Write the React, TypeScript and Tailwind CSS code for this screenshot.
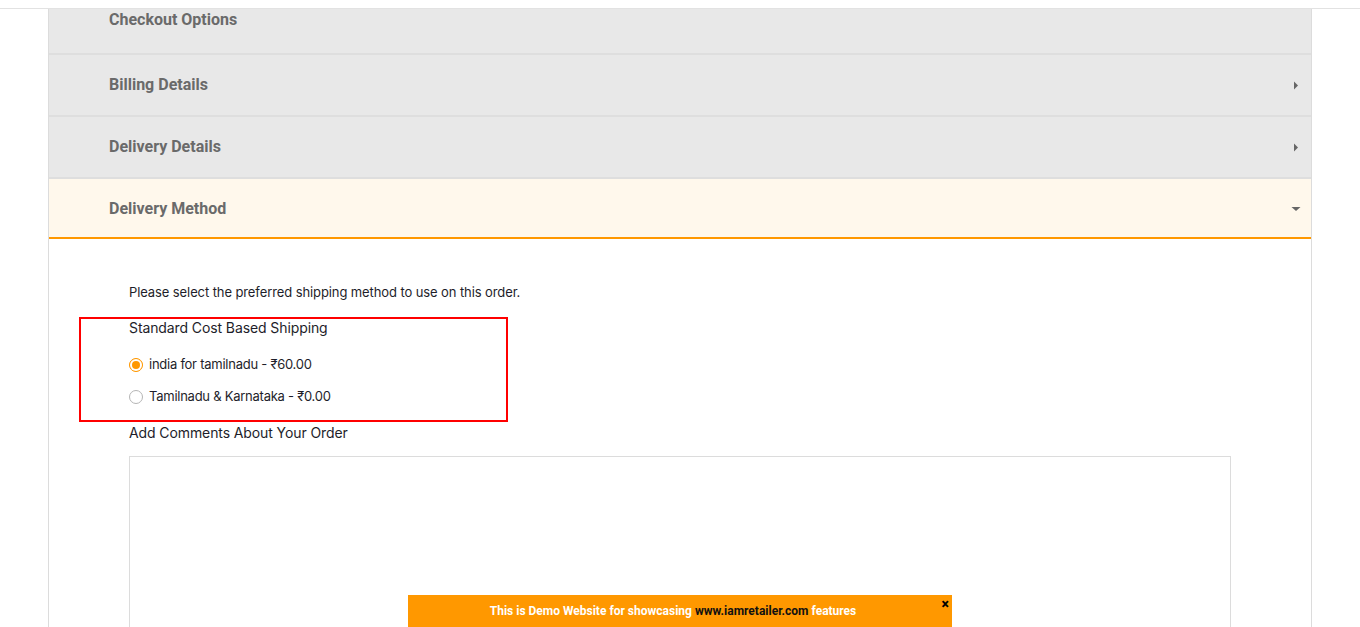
export default function App() {
  const headers = [
    { title: "Billing Details" },
    { title: "Delivery Details" },
  ];
  return (
    <div className="relative h-[627px] overflow-hidden bg-white" style={{ fontFamily: "Inter, 'Noto Sans', sans-serif" }}>
      <div className="pt-2">
        <div className="border-t border-[#e2e2e2]">
          <div className="ml-[48px] w-[1264px] border-x border-[#dcdcdc]">
            <div className="h-[46px] bg-[#e8e8e8] border-b-2 border-[#dedede] pl-[60px]">
              <span className="relative top-[-2px] text-[16px] font-bold text-[#6a6a6a]" style={{ fontFamily: "Roboto, sans-serif" }}>Checkout Options</span>
            </div>
            {headers.map((h) => (
              <div key={h.title} className="h-[62px] bg-[#e8e8e8] border-b-2 border-[#dedede] pl-[60px] pr-[12px] flex items-center justify-between">
                <span className="text-[16px] font-bold text-[#6a6a6a]" style={{ fontFamily: "Roboto, sans-serif" }}>{h.title}</span>
                <svg width="6" height="9" viewBox="0 0 6 9"><path d="M1 0.5L5 4.5L1 8.5Z" fill="#666" /></svg>
              </div>
            ))}
            <div className="h-[60px] bg-[#fff8ec] border-b-2 border-[#ff9800] pl-[60px] pr-[10px] pt-[2px] flex items-center justify-between">
              <span className="text-[16px] font-bold text-[#6a6a6a]" style={{ fontFamily: "Roboto, sans-serif" }}>Delivery Method</span>
              <svg width="10" height="6" viewBox="0 0 10 6"><path d="M0.5 1L9.5 1L5 5Z" fill="#666" /></svg>
            </div>
            <div className="relative pl-[80px] pr-[80px] pt-[43px] text-[#1e1e2a]">
              <p className="text-[13px] leading-[20px] tracking-[-0.1px]">Please select the preferred shipping method to use on this order.</p>
              <p className="mt-[16px] text-[14px] leading-[20px] tracking-[-0.1px]">Standard Cost Based Shipping</p>
              <label className="mt-[17px] flex items-center gap-[6px] h-[20px] text-[13px] tracking-[-0.25px]">
                <span className="w-[14px] h-[14px] rounded-full bg-[#ff9800] border-[1px] border-[#ff9800] flex items-center justify-center">
                  <span className="w-[8px] h-[8px] rounded-full bg-[#ff9800] ring-2 ring-white"></span>
                </span>
                india for tamilnadu - ₹60.00
              </label>
              <label className="mt-[12px] flex items-center gap-[6px] h-[20px] text-[13px] tracking-[-0.25px]">
                <span className="w-[14px] h-[14px] rounded-full border-[1.5px] border-[#b5b5b5] bg-white"></span>
                Tamilnadu &amp; Karnataka - ₹0.00
              </label>
              <p className="mt-[16px] text-[14px] leading-[20px] tracking-[-0.1px]">Add Comments About Your Order</p>
              <div className="mt-[13px] h-[200px] border border-[#dcdcdc]"></div>
              <div className="absolute left-[30px] top-[78px] w-[429px] h-[105px] border-2 border-[#ff0000]"></div>
            </div>
          </div>
        </div>
      </div>
      <div className="absolute left-[408px] top-[595px] w-[544px] h-[32px] bg-[#ff9800] flex items-center justify-center pr-[14px] text-[12px] font-bold text-white" style={{ fontFamily: "Roboto, sans-serif" }}>
        <span>This is Demo Website for showcasing <span className="text-[#111]">www.iamretailer.com</span> features</span>
        <span className="absolute right-[3px] top-[2px] text-[14px] text-black font-black leading-none">×</span>
      </div>
    </div>
  );
}
